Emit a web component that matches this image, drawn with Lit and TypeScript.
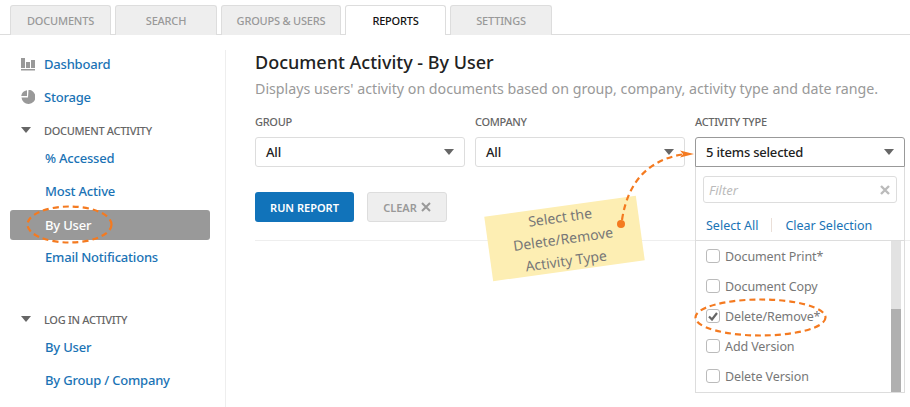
import { LitElement, html, css, svg } from "lit";
import { customElement } from "lit/decorators.js";

const caret = html`<svg class="caret" viewBox="0 0 10 6"><path d="M0 0H10L5 6Z"/></svg>`;
const ITEMS = [
  ["Document Print*", false],
  ["Document Copy", false],
  ["Delete/Remove*", true],
  ["Add Version", false],
  ["Delete Version", false],
] as const;

@customElement("app-root")
export class AppRoot extends LitElement {
  static styles = css`
    :host { display: block; position: relative; width: 910px; height: 407px; overflow: hidden; background: #fff;
      font-family: "Noto Sans", sans-serif; font-size: 13px; color: #222; }
    * { box-sizing: border-box; }
    .tabs { display: grid; grid-template-columns: 101px 102px 120px 101px 102px; column-gap: 4px; padding: 5px 0 0 10px; height: 35px; border-bottom: 1px solid #ddd; }
    .tab { display: flex; align-items: center; justify-content: center; height: 30px; background: #eee; border: 1px solid #ddd; border-bottom: 0; border-radius: 3px 3px 0 0; color: #999; font-size: 11px; letter-spacing: -0.2px; font-weight: 500; }
    .tab.on { background: #fff; color: #111; position: relative; z-index: 1; }
    .body { display: flex; }
    .side { width: 226px; height: 357px; margin-top: 15px; border-right: 1px solid #eee; padding: 0 15px 0 10px; flex: none; }
    .side-in { margin-top: -3px; }
    .nav { display: flex; align-items: center; height: 33px; color: #1a73b5; font-size: 13px; letter-spacing: -0.2px; font-weight: 500; }
    .nav.top { padding-left: 11px; }
    .nav.sub { padding-left: 35px; }
    .nav.sel { background: #999; color: #fff; height: 30px; margin: 3px 0 0; padding-bottom: 1px; border-radius: 3px; }
    .ico { width: 14px; height: 14px; margin-right: 9px; fill: #999; }
    .head { display: flex; align-items: center; height: 24px; padding-left: 11px; font-size: 11px; letter-spacing: -0.3px; color: #666; font-weight: 500; }
    .head.doc { margin-top: 5px; margin-bottom: -1px; }
    .head.log { margin-top: 34px; margin-bottom: -1px; }
    .head svg { width: 10px; height: 6px; margin-right: 13px; fill: #666; }
    .main { flex: 1; padding: 0 0 0 29px; }
    h1 { margin: 14px 0 0; font-size: 18px; line-height: 26px; font-weight: 500; color: #222; }
    .desc { font-size: 14.23px; line-height: 22px; color: #999; margin-top: 3px; white-space: nowrap; }
    .fields { display: grid; grid-template-columns: 210px 210px 210px; column-gap: 10px; margin-top: 14px; }
    label { display: block; font-size: 11px; letter-spacing: -0.3px; line-height: 16px; color: #666; font-weight: 500; margin-bottom: 7px; }
    .sel-box { display: flex; align-items: center; justify-content: space-between; height: 30px; border: 1px solid #ddd; border-radius: 3px; padding: 0 10px; font-size: 13px; letter-spacing: -0.2px; font-weight: 500; color: #222; background: #fff; }
    .sel-box.open { border-color: #999; border-radius: 3px 3px 0 0; }
    .caret { width: 10px; height: 6px; fill: #666; }
    .btns { display: flex; gap: 13px; margin-top: 25px; padding-bottom: 18px; border-bottom: 1px solid #eee; }
    .btn { display: flex; align-items: center; justify-content: center; height: 30px; border-radius: 3px; font-size: 11px; font-weight: 600; }
    .run { width: 99px; background: #1173ba; color: #fff; }
    .clear { width: 80px; background: #eee; border: 1px solid #ddd; color: #999; gap: 4px; }
    .clear svg { width: 10px; height: 10px; stroke: #999; stroke-width: 2; }
    .pop { position: absolute; left: 695px; top: 167px; width: 210px; height: 226px; background: #fff; border: 1px solid #ddd; border-top: 0; z-index: 2; display: flex; flex-direction: column; }
    .filter { display: flex; align-items: center; justify-content: space-between; margin: 9px 7px 0; height: 27px; border: 1px solid #ddd; border-radius: 3px; padding: 0 6px 0 5px; color: #bbb; font-style: italic; font-size: 13px; }
    .filter svg { width: 10px; height: 10px; stroke: #bbb; stroke-width: 2.4; }
    .links { display: flex; align-items: center; height: 38px; padding: 7px 0 0 10px; color: #1a73b5; font-size: 12.5px; border-bottom: 1px solid #ddd; }
    .links i { width: 1px; height: 14px; background: #eadfd8; margin: 0 13px 0 13px; }
    .list { flex: 1; display: flex; }
    .rows { flex: 1; }
    .row { display: flex; align-items: center; height: 30px; padding-left: 10px; gap: 5px; color: #777; font-size: 12.5px; letter-spacing: -0.1px; }
    .cb { width: 14px; height: 14px; border: 1px solid #bbb; border-radius: 3px; display: flex; align-items: center; justify-content: center; }
    .cb svg { width: 10px; height: 9px; stroke: #666; stroke-width: 2.2; fill: none; }
    .sb { width: 10px; margin-right: 3px; background: linear-gradient(#e2e2e2 0 68px, #b0b0b0 68px); }
    .note { position: absolute; left: 488px; top: 206px; width: 153px; height: 65px; padding-right: 3px; transform: rotate(-7.9deg); background: #fdeeb3; z-index: 3; display: flex; align-items: center; justify-content: center; text-align: center; color: #777; font-size: 14px; line-height: 22px; }
    .ann { position: absolute; left: 0; top: 0; width: 910px; height: 407px; z-index: 4; pointer-events: none; }
  `;

  render() {
    return html`
      <div class="tabs">
        <div class="tab">DOCUMENTS</div><div class="tab">SEARCH</div><div class="tab">GROUPS &amp; USERS</div>
        <div class="tab on">REPORTS</div><div class="tab">SETTINGS</div>
      </div>
      <div class="body">
        <aside class="side"><div class="side-in">
          <div class="nav top"><svg class="ico" viewBox="0 0 14 14"><path d="M0 1h4v10H0zM5 5h4v6H5zM10 3h4v8h-4zM0 12h14v1.500H0z"/></svg>Dashboard</div>
          <div class="nav top"><svg class="ico" viewBox="0 0 14 14"><path d="M7.500 0A7 7 0 1 1 .5 7.500H7L7.500 0ZM8.500 0a6 6 0 0 1 5.500 6H8.500z" /><path d="M6 0.200A7 7 0 0 0 .2 6H6z"/></svg>Storage</div>
          <div class="head doc"><svg viewBox="0 0 10 6"><path d="M0 0H10L5 6Z"/></svg>DOCUMENT ACTIVITY</div>
          <div class="nav sub">% Accessed</div>
          <div class="nav sub">Most Active</div>
          <div class="nav sub sel">By User</div>
          <div class="nav sub">Email Notifications</div>
          <div class="head log"><svg viewBox="0 0 10 6"><path d="M0 0H10L5 6Z"/></svg>LOG IN ACTIVITY</div>
          <div class="nav sub">By User</div>
          <div class="nav sub">By Group / Company</div>
        </div></aside>
        <main class="main">
          <h1>Document Activity - By User</h1>
          <div class="desc">Displays users' activity on documents based on group, company, activity type and date range.</div>
          <div class="fields">
            <div><label>GROUP</label><div class="sel-box">All ${caret}</div></div>
            <div><label>COMPANY</label><div class="sel-box">All ${caret}</div></div>
            <div><label>ACTIVITY TYPE</label><div class="sel-box open">5 items selected ${caret}</div></div>
          </div>
          <div class="btns">
            <div class="btn run">RUN REPORT</div>
            <div class="btn clear">CLEAR <svg viewBox="0 0 10 10"><path d="M1 1L9 9M9 1L1 9"/></svg></div>
          </div>
        </main>
      </div>
      <div class="pop">
        <div class="filter">Filter <svg viewBox="0 0 10 10"><path d="M1 1L9 9M9 1L1 9"/></svg></div>
        <div class="links">Select All<i></i>Clear Selection</div>
        <div class="list">
          <div class="rows">
            ${ITEMS.map(([t, c]) => html`<div class="row"><span class="cb">${c ? html`<svg viewBox="0 0 10 9"><path d="M1 4.500L4 7.500L9 1"/></svg>` : ""}</span>${t}</div>`)}
          </div>
          <div class="sb"></div>
        </div>
      </div>
      <div class="note">Select the<br />Delete/Remove<br />Activity Type</div>
      <svg class="ann" viewBox="0 0 910 407">
        ${svg`
          <g fill="none" stroke="#f47a20" stroke-width="2.200" stroke-dasharray="6 4">
            <ellipse cx="69.500" cy="224.500" rx="42" ry="18"/>
            <ellipse cx="760.500" cy="317.500" rx="65" ry="18"/>
            <path d="M622 220C628 180 650 160 682 154.500"/>
          </g>
          <circle cx="621" cy="224" r="4" fill="#f47a20"/>
          <path d="M680 150.500L694 154L680 157.500L683 154Z" fill="#f47a20"/>
        `}
      </svg>
    `;
  }
}
